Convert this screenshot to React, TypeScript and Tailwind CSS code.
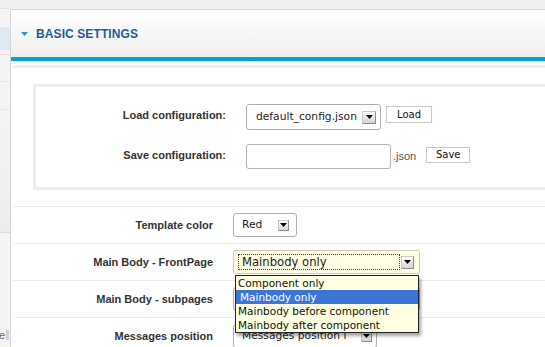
import React from "react";

function Arrow({ w, h }: { w: number; h: number }) {
  return (
    <span
      className="flex items-center justify-center bg-gradient-to-b from-[#fdfdfd] to-[#d4d4d4] border border-[#c8c8c8] border-r-[#8e8e8e] border-b-[#8e8e8e] shrink-0"
      style={{ width: w, height: h }}
    >
      <svg width="7" height="4" viewBox="0 0 7 4">
        <polygon points="0,0 7,0 3.5,4" fill="#000" />
      </svg>
    </span>
  );
}

export default function App() {
  return (
    <div className="w-[545px] h-[347px] overflow-hidden bg-[#f0f0f0] flex font-['Liberation_Sans',Arial,sans-serif]">
      {/* sidebar remnant */}
      <div className="w-[10px] shrink-0 mt-[8px] flex flex-col border-t border-[#e4e4e4] bg-[#f4f4f4] overflow-hidden">
        <div className="h-[18px] shrink-0" />
        <div className="h-[23px] shrink-0 bg-[#dfe9f3]" />
        <div className="h-[5px] shrink-0 border-b border-[#e2e2e2]" />
        <div className="h-[27px] shrink-0 border-b border-[#e6e6e6]" />
        <div className="h-[28px] shrink-0 border-b border-[#e6e6e6]" />
        <div className="h-[123px] shrink-0 border-b border-[#dcdcdc] bg-gradient-to-b from-[#f4f4f4] to-[#ececec]" />
        <div className="flex-1 flex flex-col justify-end pb-[5px]">
          <div className="flex items-center gap-[1px] h-[14px]">
            <span className="text-[11px] leading-[12px] text-[#666] -ml-[1px]">e</span>
            <span className="w-[3px] h-[10px] bg-[#d0d0d0]" />
          </div>
        </div>
      </div>

      {/* panel */}
      <div className="w-[535px] shrink-0 mt-[9px] border-t border-l border-[#d6d6d6] bg-white flex flex-col overflow-hidden">
        <div className="h-[47px] shrink-0 bg-gradient-to-b from-[#ffffff] to-[#efefef] flex items-center pl-[10px]">
          <svg width="7" height="4" viewBox="0 0 7 4" className="mt-[1px]">
            <polygon points="0,0 7,0 3.5,4" fill="#1b9ad6" />
          </svg>
          <span className="ml-[8px] text-[12px] font-bold text-[#1f5e94] tracking-[0.1px]">BASIC SETTINGS</span>
        </div>
        <div className="h-[4px] shrink-0 bg-[#00a0db]" />

        <div className="shrink-0 pt-[4px] pl-[2px]">
          <div className="border-t-[3px] border-[#efefef] rounded-tl-[4px] pt-[16px]">
            {/* configuration fieldset */}
            <div className="ml-[20px] w-[540px] h-[106px] border-[3px] border-[#eeeeee] pt-[17px] flex flex-col gap-[14px]">
              <div className="flex items-start h-[26px]">
                <div className="w-[190px] text-right font-bold text-[11px] leading-[22px] text-[#333]">
                  Load configuration:
                </div>
                <div className="ml-[20px] w-[135px] h-[26px] border border-[#aeaeae] rounded-[3px] bg-white flex items-center pl-[9px] pr-[4px] justify-between">
                  <span className="font-['DejaVu_Sans',sans-serif] text-[10.7px] text-[#222]">default_config.json</span>
                  <Arrow w={14} h={13} />
                </div>
                <button className="ml-[5px] mt-[2px] w-[46px] h-[17px] border border-[#c8c8c8] bg-white font-['DejaVu_Sans',sans-serif] text-[10px] leading-[15px] text-[#111]">
                  Load
                </button>
              </div>
              <div className="flex items-start h-[25px]">
                <div className="w-[190px] text-right font-bold text-[11px] leading-[23px] text-[#333]">
                  Save configuration:
                </div>
                <div className="ml-[20px] w-[145px] h-[25px] border border-[#b4b4b4] rounded-[3px] bg-white" />
                <span className="ml-[2px] text-[11px] leading-[24px] text-[#555]">.json</span>
                <button className="ml-[10px] mt-[3px] w-[44px] h-[16px] border border-[#c8c8c8] bg-white font-['DejaVu_Sans',sans-serif] text-[10px] leading-[14px] text-[#111]">
                  Save
                </button>
              </div>
            </div>

            <div className="h-[16px]" />

            {/* rows */}
            <div className="flex items-center h-[37px] border-t border-[#ececec]">
              <div className="w-[200px] text-right font-bold text-[11px] text-[#333]">Template color</div>
              <div className="ml-[20px] w-[64px] h-[24px] border border-[#aeaeae] rounded-[3px] bg-white flex items-center justify-between pl-[8px] pr-[7px]">
                <span className="font-['DejaVu_Sans',sans-serif] text-[10.7px] text-[#222]">Red</span>
                <Arrow w={11} h={11} />
              </div>
            </div>

            <div className="flex items-center h-[37px] border-t border-[#ececec]">
              <div className="w-[200px] text-right font-bold text-[11px] text-[#333]">Main Body - FrontPage</div>
              <div className="ml-[20px] relative w-[187px] h-[24px] border border-[#cfcfb8] rounded-[2px] bg-[#fffde3] flex items-center pl-[4px] pr-[5px] justify-between">
                <div className="w-[162px] h-[16px] border border-dotted border-[#444] flex items-center pl-[3px]">
                  <span className="font-['DejaVu_Sans',sans-serif] text-[11.6px] text-[#222] leading-[14px]">Mainbody only</span>
                </div>
                <Arrow w={13} h={13} />
                {/* open list */}
                <div className="absolute left-[1px] top-[24px] w-[184px] border border-[#222] bg-[#ffffe1] shadow-[2px_3px_3px_rgba(0,0,0,0.35)] z-10 font-['DejaVu_Sans',sans-serif] text-[10.5px] text-[#111]">
                  <div className="h-[14px] leading-[14px] pl-[2px]">Component only</div>
                  <div className="h-[14px] leading-[14px] pl-[4px] bg-[#3b76d6] text-white">Mainbody only</div>
                  <div className="h-[14px] leading-[14px] pl-[2px]">Mainbody before component</div>
                  <div className="h-[14px] leading-[14px] pl-[2px]">Mainbody after component</div>
                </div>
              </div>
            </div>

            <div className="flex items-center h-[37px] border-t border-[#ececec]">
              <div className="w-[200px] text-right font-bold text-[11px] text-[#333]">Main Body - subpages</div>
              <div className="ml-[20px] w-[187px] h-[24px] border border-[#aeaeae] rounded-[3px] bg-white" />
            </div>

            <div className="flex items-center h-[37px] border-t border-[#ececec]">
              <div className="w-[200px] text-right font-bold text-[11px] text-[#333]">Messages position</div>
              <div className="ml-[20px] w-[144px] h-[24px] border border-[#aeaeae] rounded-[3px] bg-white flex items-center pl-[8px] pr-[4px]">
                <span className="w-[104px] overflow-hidden whitespace-nowrap font-['DejaVu_Sans',sans-serif] text-[10.7px] text-[#222]">
                  Messages position left
                </span>
                <span className="ml-auto">
                  <Arrow w={11} h={12} />
                </span>
              </div>
            </div>
          </div>
        </div>
      </div>
    </div>
  );
}
